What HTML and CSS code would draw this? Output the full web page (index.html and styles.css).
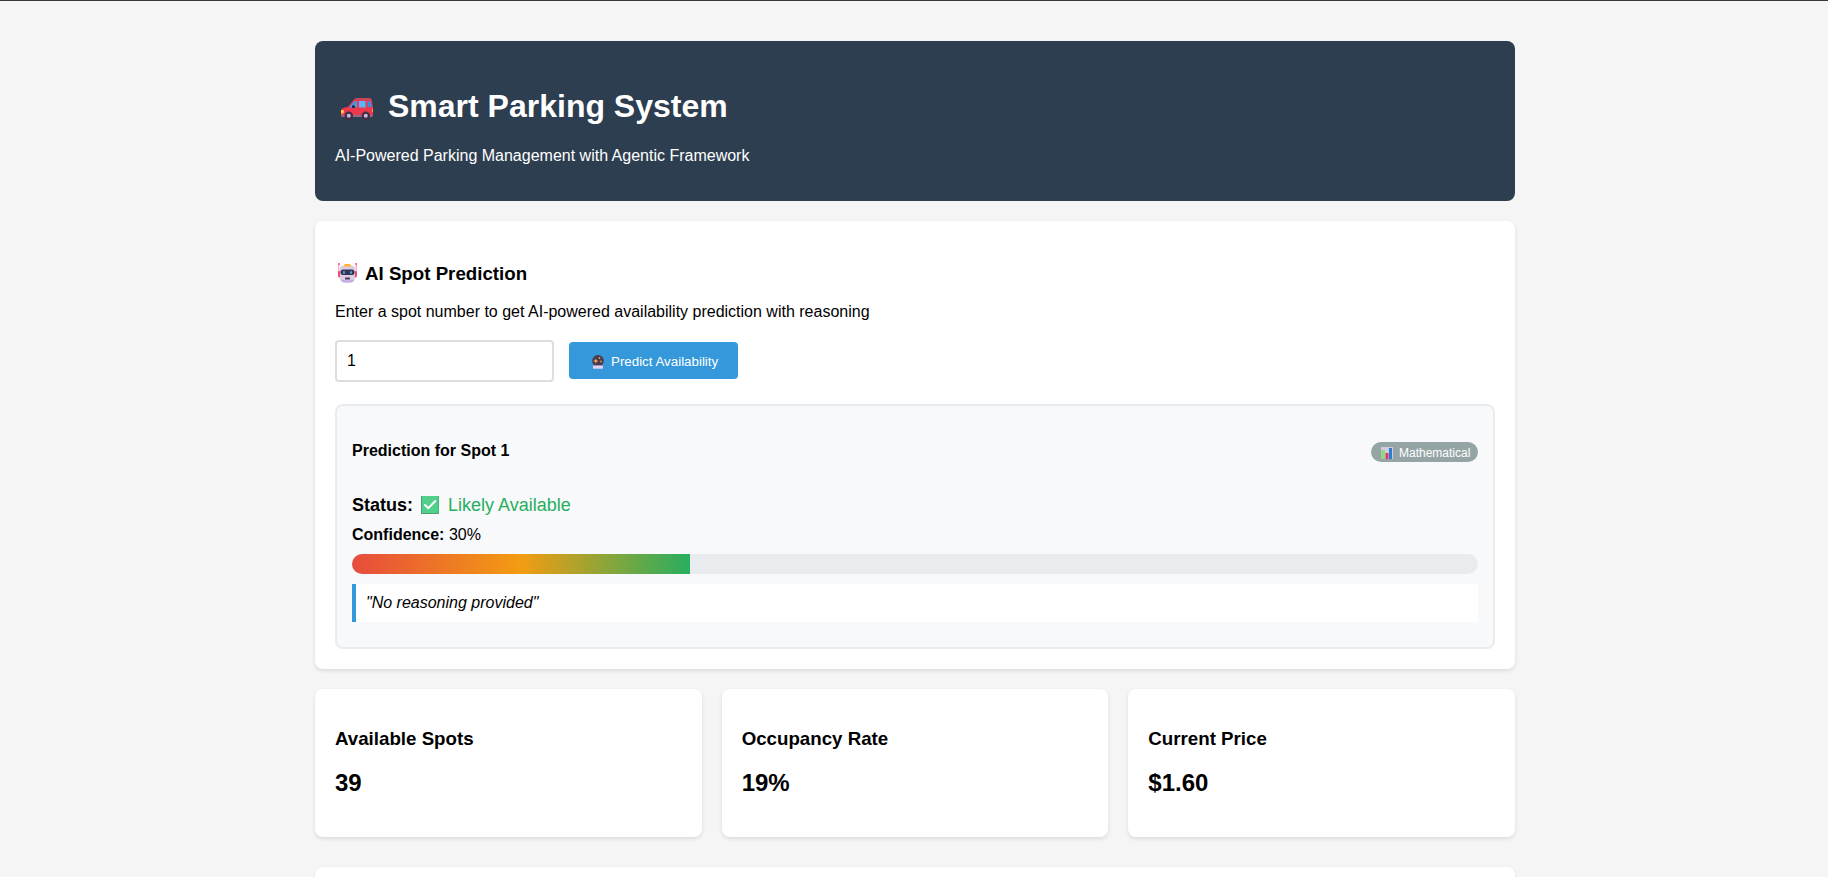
FILE: index.html
```html
<!DOCTYPE html>
<html lang="en">
<head>
<meta charset="utf-8">
<title>Smart Parking System</title>
<link rel="stylesheet" href="styles.css">
</head>
<body>
<div class="container">
  <header class="header">
    <h1>
      <svg class="car" viewBox="0 0 32 22" aria-hidden="true">
        <path d="M0 12Q1 10 4 9.6L7 9 12 2.5Q14 0 17 0H28Q30.5 0 31 3L32 9V17Q32 19 30 19H2Q0 19 0 17Z" fill="#ee384e"/>
        <path d="M14 1Q15 0 17 0H28Q30 0 30.5 2H13Z" fill="#c84658"/>
        <path d="M8.5 9 13 3.5Q14 2.8 16 3V9.5H9Z" fill="#4499e8"/>
        <path d="M18 3H24.5V9.5H18Z" fill="#5db4f8"/>
        <path d="M26.5 3H29.5L30.8 9H26.5Z" fill="#3d8fdc"/>
        <path d="M11 7.5Q13.5 6 14 8.5V10H11Z" fill="#302744"/>
        <path d="M0 12H2.5Q3.5 14 2.5 15.5H0Z" fill="#ffce42"/>
        <path d="M31 11H32V14H31Z" fill="#f2a044"/>
        <path d="M0 17H32Q32 19 30 19H2Q0 19 0 17Z" fill="#8f6b88"/>
        <circle cx="7.8" cy="17.8" r="4.2" fill="#452d48"/><circle cx="24.8" cy="17.8" r="4.2" fill="#452d48"/>
        <circle cx="7.8" cy="17.8" r="2" fill="#cdb9da"/><circle cx="24.8" cy="17.8" r="2" fill="#cdb9da"/>
      </svg>
      <span>Smart Parking System</span>
    </h1>
    <p>AI-Powered Parking Management with Agentic Framework</p>
  </header>

  <section class="card prediction">
    <h3>
      <svg class="robot" viewBox="0 0 19 20" aria-hidden="true">
        <path d="M.3 1H1.3V13H.3ZM17.7 1H18.7V13H17.7Z" fill="#f58ba4"/>
        <path d="M0 0H1.6V2H0ZM17.4 0H19V2H17.4Z" fill="#ef5a80"/>
        <path d="M0 9Q0 8 2 8V14.5Q0 14.5 0 13ZM19 9Q19 8 17 8V14.5Q19 14.5 19 13Z" fill="#ef4a75"/>
        <path d="M2 6Q2 2.5 6 2.5H13Q17 2.5 17 6V14.5Q17 19.5 12.5 19.5H6.5Q2 19.5 2 14.5Z" fill="#dccbe4"/>
        <path d="M3 16.5Q9.5 18.5 16 16.5Q15 19.5 12.5 19.5H6.5Q4 19.5 3 16.5Z" fill="#c5a9e2"/>
        <path d="M6 3.5V2.5Q6 1 7.5 1H11.5Q13 1 13 2.5V3.5Z" fill="#ffb52f"/>
        <rect x="2.5" y="6.5" width="14" height="5.5" rx="2.5" fill="#343453"/>
        <rect x="5" y="8" width="2" height="3" rx="1" fill="#509fdb"/><rect x="12" y="8" width="2" height="3" rx="1" fill="#509fdb"/>
        <rect x="7" y="14.5" width="5" height="2" rx=".6" fill="#4b3b5b"/>
      </svg>
      <span>AI Spot Prediction</span>
    </h3>
    <p class="hint">Enter a spot number to get AI-powered availability prediction with reasoning</p>
    <div class="controls">
      <input class="spot" type="text" value="1" aria-label="Spot number">
      <button class="predict" type="button">
        <svg class="ball" viewBox="0 0 12 14" aria-hidden="true">
          <path d="M2 9.5H10L11 13.5H1Z" fill="#d8c5ed"/>
          <circle cx="6" cy="5.8" r="5.8" fill="#483b4e"/>
          <path d="M1.5 10H10.5V11H1.5Z" fill="#ab91c4"/>
          <path d="M1 11H11V13.5H1Z" fill="#e2d2f0"/>
          <path d="M3.8 3.2 4.5 5.3 6.6 6 4.5 6.7 3.8 8.8 3.1 6.7 1 6 3.1 5.3Z" fill="#ffad4a"/>
          <circle cx="7.5" cy="3" r=".9" fill="#f1a449"/><circle cx="9" cy="6.5" r=".9" fill="#e89849"/>
        </svg>
        <span>Predict Availability</span>
      </button>
    </div>
    <div class="result">
      <div class="result-head">
        <h4>Prediction for Spot 1</h4>
        <span class="badge">
          <svg class="chart" viewBox="0 0 12 12" aria-hidden="true">
            <path d="M0 0H12V12H0Z" fill="#d6cbdc"/>
            <path d="M0 3H4V12H0Z" fill="#8edc80"/><path d="M4.5 6H7.5V12H4.5Z" fill="#e5336f"/><path d="M8 1H11V12H8Z" fill="#287fd1"/>
          </svg>
          <span>Mathematical</span>
        </span>
      </div>
      <div class="status">
        <strong>Status:</strong>
        <svg class="check" viewBox="0 0 18 18" aria-hidden="true">
          <path d="M0 0H18V18H0Z" fill="#52cf8b"/><path d="M0 0H1V17H18V18H0Z" fill="#4b9e76"/><path d="M17 0H18V18H17Z" fill="#45b579"/>
          <path d="M4 9 7.3 12.2 14.3 5" fill="none" stroke="#fff" stroke-width="2" stroke-linecap="round"/>
        </svg>
        <span class="available">Likely Available</span>
      </div>
      <div class="confidence"><strong>Confidence:</strong> 30%</div>
      <div class="bar"><div class="fill" style="width:30%"></div></div>
      <div class="reason">"No reasoning provided"</div>
    </div>
  </section>

  <div class="stats">
    <div class="card stat"><h3>Available Spots</h3><p>39</p></div>
    <div class="card stat"><h3>Occupancy Rate</h3><p>19%</p></div>
    <div class="card stat"><h3>Current Price</h3><p>$1.60</p></div>
  </div>
  <section class="card next"></section>
</div>
</body>
</html>
```
FILE: styles.css
```css
* { box-sizing: border-box; }
body {
  height: 877px;
  margin: 0;
  overflow: hidden;
  border-top: 1px solid #3c353a;
  background: #f5f5f5;
  color: #000;
  font: 16px/18px "Liberation Sans", Arial, sans-serif;
}
h1, h3, h4, p { margin: 0; }
svg { display: block; flex: none; }
.container { width: 1202px; height: 876px; margin: 0 auto; padding: 40px 0 0 2px; }
.header {
  height: 160px;
  padding: 41px 20px 0;
  border-radius: 8px;
  background: #2c3e50;
  color: #fff;
}
.header h1 { display: flex; height: 43px; font-size: 32px; line-height: 48px; }
.car { width: 32px; height: 22px; margin: 16px 15px 0 6px; }
.header p { margin-top: 22px; }
.card { border-radius: 8px; background: #fff; box-shadow: 0 2px 4px rgba(0,0,0,.1); }
.prediction { height: 448px; margin-top: 20px; padding: 40px 20px 20px; }
.card h3 { display: flex; font-size: 18.72px; line-height: 25px; }
.robot { width: 19px; height: 20px; margin: 2px 8px 0 3px; }
.hint { margin-top: 17px; }
.controls { display: flex; align-items: flex-start; height: 42px; margin-top: 19px; }
.spot {
  width: 219px;
  height: 42px;
  padding: 0 10px;
  border: 2px solid #ddd;
  border-radius: 4px;
  font: 16px/18px "Liberation Sans", Arial, sans-serif;
}
.predict {
  display: flex;
  width: 169px;
  height: 37px;
  margin: 2px 0 0 15px;
  padding: 12px 0 0 23px;
  border: 0;
  border-radius: 4px;
  background: #3498db;
  color: #fff;
  font: 13.333px/15px "Liberation Sans", Arial, sans-serif;
}
.ball { width: 12px; height: 14px; margin: 1px 7px 0 0; }
.result {
  height: 245px;
  margin-top: 22px;
  padding: 15px;
  border: 2px solid #e9ecef;
  border-radius: 8px;
  background: #f8f9fa;
}
.result-head { display: flex; justify-content: space-between; padding-top: 21px; }
.badge {
  display: flex;
  width: 107px;
  height: 20px;
  padding: 4px 0 0 10px;
  border-radius: 12px;
  background: #95a5a6;
  color: #fff;
  font-size: 12px;
  line-height: 14px;
}
.chart { width: 12px; height: 12px; margin: 1px 6px 0 0; }
.status { display: flex; margin-top: 32px; font-size: 18px; line-height: 22px; }
.check { width: 18px; height: 18px; margin: 2px 9px 0 8px; }
.available { color: #27ae60; }
.confidence { margin-top: 10px; }
.bar { height: 20px; margin-top: 10px; overflow: hidden; border-radius: 10px; background: #e9ecef; }
.fill { height: 100%; background: linear-gradient(90deg, #e74c3c, #f39c12, #27ae60); }
.reason { height: 38px; margin-top: 10px; padding: 10px; border-left: 4px solid #3498db; background: #fff; font-style: italic; }
.stats { display: grid; grid-template-columns: repeat(3, 1fr); gap: 20px; margin-top: 20px; }
.stat { height: 148px; padding: 39px 20px 0; }
.stat h3 { line-height: 22px; }
.stat p { margin-top: 19px; font-size: 24px; font-weight: 700; line-height: 28px; }
.next { height: 10px; margin-top: 30px; border-radius: 8px 8px 0 0; }
```
